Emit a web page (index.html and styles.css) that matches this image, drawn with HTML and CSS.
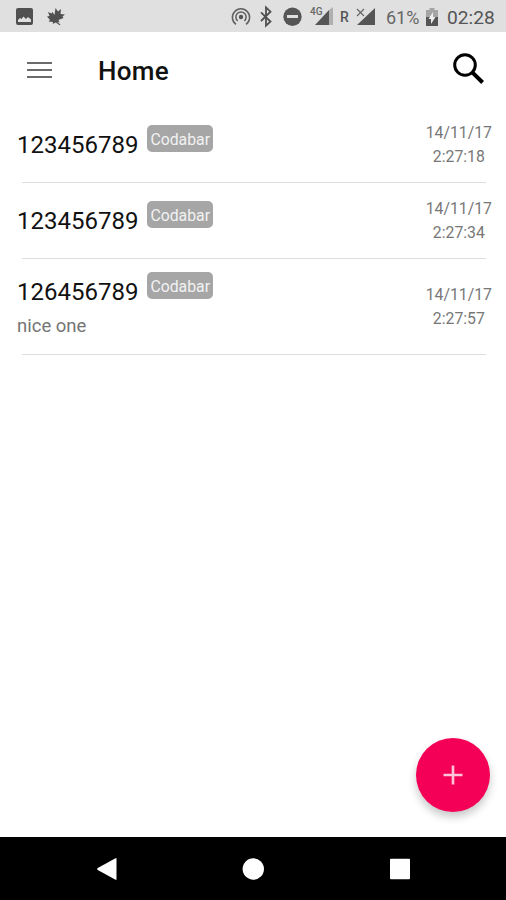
FILE: index.html
```
<!DOCTYPE html>
<html lang="en">
<head>
<meta charset="UTF-8" />
<meta name="viewport" content="width=device-width, initial-scale=1" />
<title>Home</title>
<link rel="stylesheet" href="styles.css">
</head>
<body>

<div class="statusbar">
  <svg class="notifications" width="80" height="32" viewBox="0 0 80 32">
    <path fill="#505050" fill-rule="evenodd" d="M18 8h13a2 2 0 0 1 2 2v13a2 2 0 0 1-2 2H18a2 2 0 0 1-2-2V10a2 2 0 0 1 2-2zM18 22h13v-2.5l-3-2.5-2 2-2.5-2.5-2 2.500-1.500-1-2 2z"/>
    <path fill="#505050" d="M55.500 8l2.500 3.500 3-2.500-.5 5 4.500.5-2.500 2 1 1.500-5 2 1 2.500-2.500-.5 3.500 2.500-.8.800-4-2.800-3 1.500.3-2-4.500-.5 1.500-1.500-3-3.500 2.500-.5-1.500-4 3.500 1.500 1-1.500 2 3z"/>
  </svg>
  <svg width="155" height="32" viewBox="228 0 155 32">
    <g fill="none" stroke="#606060" stroke-width="1.5">
      <path d="M236 24.4a8.6 8.6 0 1 1 10 0"/>
      <path d="M237.7 21a5.1 5.1 0 1 1 6.6 0"/>
      <path stroke="#505050" stroke-width="1.8" d="M261 12.3l9.5 9.2-4.5 4.2V7.4l4.5 4.3-9.5 9.3"/>
    </g>
    <circle cx="241" cy="17" r="2.2" fill="#555"/>
    <circle cx="292.5" cy="16.7" r="9.2" fill="#555"/>
    <rect x="287" y="15" width="11" height="3" fill="#dedede"/>
    <text class="network" x="310" y="15">4G</text>
    <path fill="#b0b0b0" d="M329 10l4-3v18h-4z"/>
    <path fill="#555" d="M315 25l14-15v15z"/>
    <text class="roaming" x="340" y="22">R</text>
    <path fill="#555" d="M357 25l18-17v17z"/>
    <path stroke="#666" stroke-width="1.2" d="M357 9l7 7M364 9l-7 7"/>
  </svg>
  <span class="percent">61%</span>
  <svg class="battery" width="12" height="18" viewBox="0 0 12 18">
    <path fill="#a5a5a5" d="M3.5 0h5v2H12v8H0V2h3.5z"/>
    <path fill="#555" d="M0 9h12v9H0z"/>
    <path fill="#eee" d="M7 4L2.5 11H5v5l4.5-7H7z"/>
  </svg>
  <span class="clock">02:28</span>
</div>

<header class="toolbar">
  <svg class="menu" width="26" height="18" viewBox="0 0 26 18">
    <path stroke="#6b6b6b" stroke-width="2.2" d="M0 2h25M0 9h25M0 16h25"/>
  </svg>
  <h1>Home</h1>
  <svg class="search" width="34" height="34" viewBox="0 0 34 34">
    <circle cx="13" cy="13" r="10.3" fill="none" stroke="#000" stroke-width="3"/>
    <path stroke="#000" stroke-width="4" d="M20.3 20.3l10.3 10.2"/>
  </svg>
</header>

<main>
  <div class="row">
    <div class="info">
      <div class="code">123456789 <span class="tag">Codabar</span></div>
    </div>
    <div class="date">14/11/17<br />2:27:18</div>
  </div>
  <div class="row">
    <div class="info">
      <div class="code">123456789 <span class="tag">Codabar</span></div>
    </div>
    <div class="date">14/11/17<br />2:27:34</div>
  </div>
  <div class="row tall">
    <div class="info">
      <div class="code">126456789 <span class="tag">Codabar</span></div>
      <div class="note">nice one</div>
    </div>
    <div class="date">14/11/17<br />2:27:57</div>
  </div>
</main>

<button class="fab" aria-label="Add">
  <svg width="20" height="20" viewBox="0 0 20 20">
    <path stroke="#ffc4d8" stroke-width="2.6" d="M0.5 10h19M10 0.5v19"/>
  </svg>
</button>

<nav class="navbar">
  <svg width="22" height="24" viewBox="0 0 22 24"><path fill="#fff" d="M20.5 1.2h1v21.600h-1L2.300 12.700v-1.400z"/></svg>
  <svg width="22" height="24" viewBox="0 0 22 24"><circle cx="11.3" cy="12" r="10.7" fill="#fff"/></svg>
  <svg width="22" height="24" viewBox="0 0 22 24"><rect x="1" y="1.7" width="20" height="20.6" rx="1" fill="#fff"/></svg>
</nav>

</body>
</html>
```
FILE: styles.css
```
* {
  box-sizing: border-box;
}
body {
  margin: 0;
  height: 900px;
  display: flex;
  flex-direction: column;
  background: #fff;
  color: #111;
  font-family: Roboto, "Liberation Sans", sans-serif;
  overflow: hidden;
}
svg {
  display: block;
  flex: none;
}
.statusbar {
  height: 32px;
  display: flex;
  align-items: center;
  background: #e0e0e0;
  color: #555;
  white-space: nowrap;
}
.notifications {
  margin-right: 148px;
}
.network {
  font-size: 10px;
  font-weight: 500;
  fill: #666;
}
.roaming {
  font-size: 14px;
  font-weight: 500;
  fill: #555;
}
.percent {
  width: 43px;
  padding: 3px 0 0 3px;
  font-size: 18px;
  color: #666;
}
.battery {
  margin-top: 1px;
}
.clock {
  padding: 3px 0 0 9px;
  font-size: 19.2px;
}
.toolbar {
  height: 75px;
  display: flex;
  align-items: center;
  padding: 2px 20px 0 27px;
}
.menu {
  margin-bottom: 1px;
}
.toolbar h1 {
  flex: 1;
  margin: 1px 0 0 45px;
  font-size: 26px;
  font-weight: 500;
  line-height: 30px;
  letter-spacing: 0.3px;
}
.search {
  margin-bottom: 3px;
}
main {
  flex: 1;
}
.row {
  height: 76px;
  display: flex;
  align-items: center;
  justify-content: space-between;
  padding: 0 14px 1px 17px;
  background: linear-gradient(#dedede, #dedede) 22px 100% no-repeat;
  background-size: 464px 1.5px;
}
.row.tall {
  height: 96px;
}
.code {
  display: flex;
  align-items: center;
  gap: 9px;
  height: 34px;
  font-size: 24px;
  line-height: 34px;
}
.tag {
  height: 27px;
  margin-bottom: 12px;
  padding: 0 3px;
  border-radius: 5px;
  background: #a6a6a6;
  color: #f2f2f2;
  font-size: 15.8px;
  line-height: 29px;
}
.tall .info {
  padding-top: 3px;
}
.note {
  height: 33px;
  font-size: 18.5px;
  line-height: 35px;
  color: #757575;
}
.date {
  font-size: 15.8px;
  line-height: 24px;
  text-align: center;
  color: #777;
}
.fab {
  position: absolute;
  left: 416px;
  top: 738px;
  width: 74px;
  height: 74px;
  display: flex;
  align-items: center;
  justify-content: center;
  padding: 0;
  border: none;
  border-radius: 50%;
  background: #f50057;
  box-shadow: 0 5px 8px rgba(0, 0, 0, 0.22);
}
.navbar {
  height: 63px;
  display: flex;
  align-items: center;
  justify-content: center;
  gap: 125px;
  background: #000;
}
```
